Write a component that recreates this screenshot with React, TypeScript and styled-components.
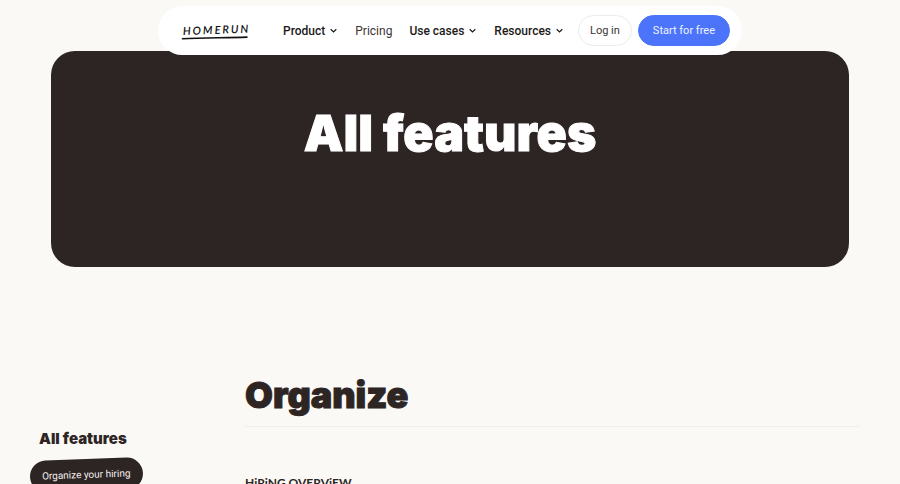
import React from "react";
import styled, { createGlobalStyle } from "styled-components";

const ink = "#2d2524";
const paper = "#faf9f5";

const GlobalStyle = createGlobalStyle`
  *, *::before, *::after { box-sizing: border-box; }
  html { scrollbar-width: none; }
  body {
    margin: 0;
    background: ${paper};
    color: ${ink};
    font-family: Roboto, "Liberation Sans", sans-serif;
  }
`;

const Header = styled.header`
  position: fixed;
  top: 6px;
  left: 0;
  right: 0;
  z-index: 10;
  display: flex;
  justify-content: center;
`;

const NavBar = styled.nav`
  display: flex;
  align-items: center;
  height: 49px;
  padding: 0 12px 0 24px;
  border-radius: 25px;
  background: #ffffff;
`;

const LogoLink = styled.a`
  display: block;
  width: 67px;
  height: 18px;
  margin-right: 34px;
  color: #111111;
`;

const LogoArt = styled.svg`
  display: block;
  overflow: visible;
`;

const LogoText = styled.text`
  font: italic 600 11px Lato, sans-serif;
  letter-spacing: 2px;
`;

const Menu = styled.ul`
  display: flex;
  align-items: center;
  gap: 17px;
  margin: 0 14px 0 0;
  padding: 0;
  list-style: none;
`;

const MenuButton = styled.button`
  display: flex;
  align-items: center;
  gap: 4px;
  padding: 0;
  border: 0;
  background: none;
  color: #1c1918;
  font: 500 12px/20px Roboto, sans-serif;
  cursor: pointer;
`;

const MenuLink = styled.a`
  color: #3a3433;
  font: 400 12px/20px Roboto, sans-serif;
  text-decoration: none;
`;

const Action = styled.a<{ $primary?: boolean }>`
  display: flex;
  align-items: center;
  height: 31px;
  margin-left: ${(p) => (p.$primary ? "6px" : "0")};
  padding: 0 ${(p) => (p.$primary ? "14px" : "11px")};
  border: 1px solid ${(p) => (p.$primary ? "#4b74fb" : "#ebebea")};
  border-radius: 16px;
  background: ${(p) => (p.$primary ? "#4b74fb" : "#ffffff")};
  color: ${(p) => (p.$primary ? "#eef2ff" : "#3a3433")};
  font: 400 11px/20px Roboto, sans-serif;
  text-decoration: none;
`;

const Hero = styled.section`
  height: 216px;
  margin: 51px 51px 0;
  padding-top: 52px;
  border-radius: 24px;
  background: ${ink};
  text-align: center;
`;

const HeroTitle = styled.h1`
  margin: 0;
  color: #ffffff;
  font: 900 50px/60px Inter, sans-serif;
  -webkit-text-stroke: 1px #ffffff;
`;

const Content = styled.div`
  display: grid;
  grid-template-columns: 198px 1fr;
  gap: 17px;
  padding: 108px 41px 0 30px;
`;

const Sidebar = styled.aside`
  padding-top: 54px;
`;

const SidebarTitle = styled.h3`
  margin: 0 0 10px 9px;
  font: 900 15px/20px Inter, sans-serif;
`;

const SidebarLink = styled.a`
  display: inline-block;
  padding: 6px 12px;
  border-radius: 16px;
  background: ${ink};
  color: #f3efed;
  font: 400 10px/20px Roboto, sans-serif;
  text-decoration: none;
  transform: rotate(-2deg);
`;

const SectionTitle = styled.h2`
  margin: 0;
  padding-bottom: 11px;
  border-bottom: 1px solid #efeeea;
  font: 900 36px/40px Inter, sans-serif;
  -webkit-text-stroke: 1px ${ink};
`;

const Handwritten = styled.h3`
  margin: 46px 0 0;
  font: 700 12px/20px Lato, sans-serif;
`;

const Chevron = () => (
  <svg width="9" height="9" viewBox="0 0 9 9" fill="none" aria-hidden="true">
    <path d="M1.7 3.3 4.5 6 7.3 3.3" stroke="currentColor" strokeWidth="1.2" />
  </svg>
);

const Dropdown = ({ label }: { label: string }) => (
  <li>
    <MenuButton type="button" aria-haspopup="true">
      {label}
      <Chevron />
    </MenuButton>
  </li>
);

export default function App() {
  return (
    <>
      <GlobalStyle />
      <Header>
        <NavBar aria-label="Main">
          <LogoLink href="#" aria-label="Homerun">
            <LogoArt width="67" height="18" viewBox="0 0 67 18">
              <LogoText x="1" y="13" fill="currentColor" transform="rotate(-2 1 13)">
                HOMERUN
              </LogoText>
              <path d="M0.5 16.7C20 15.8 43 15.8 65 15.1" fill="none" stroke="currentColor" strokeWidth="1.6" strokeLinecap="round" />
            </LogoArt>
          </LogoLink>
          <Menu>
            <Dropdown label="Product" />
            <li>
              <MenuLink href="#pricing">Pricing</MenuLink>
            </li>
            <Dropdown label="Use cases" />
            <Dropdown label="Resources" />
          </Menu>
          <Action href="#login">Log in</Action>
          <Action href="#start" $primary>
            Start for free
          </Action>
        </NavBar>
      </Header>
      <main>
        <Hero>
          <HeroTitle>All features</HeroTitle>
        </Hero>
        <Content>
          <Sidebar>
            <SidebarTitle>All features</SidebarTitle>
            <SidebarLink href="#organize">Organize your hiring</SidebarLink>
          </Sidebar>
          <section id="organize">
            <SectionTitle>Organize</SectionTitle>
            <Handwritten>HiRiNG OVERViEW</Handwritten>
          </section>
        </Content>
      </main>
    </>
  );
}
